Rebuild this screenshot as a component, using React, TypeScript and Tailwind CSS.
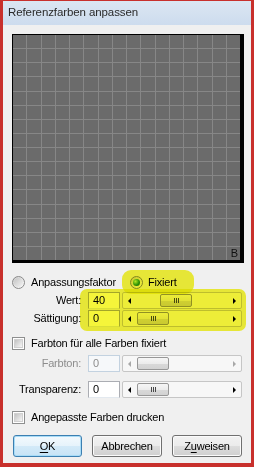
import React from "react";

function Radio({ checked }: { checked?: boolean }) {
  return (
    <span className="w-[13px] h-[13px] rounded-full border border-[#8a8a8a] bg-[linear-gradient(135deg,#cfcfcf,#fdfdfd)] flex items-center justify-center shrink-0">
      {checked ? (
        <span className="w-[7px] h-[7px] rounded-full bg-[radial-gradient(circle_at_35%_35%,#b8f08c,#2f9a1a_55%,#1b5c10)]" />
      ) : (
        <span className="w-[9px] h-[9px] rounded-full bg-[linear-gradient(135deg,#c4c4c4,#f4f4f4)]" />
      )}
    </span>
  );
}

function Check() {
  return (
    <span className="w-[13px] h-[13px] border border-[#8e8f8f] bg-white flex items-center justify-center shrink-0">
      <span className="w-[9px] h-[9px] bg-[linear-gradient(135deg,#c2c2c2,#f6f6f6)] border border-[#d0d0d0]" />
    </span>
  );
}

function Scroll({ thumb, grip = true, disabled }: { thumb: string; grip?: boolean; disabled?: boolean }) {
  return (
    <div className="w-[120px] h-[17px] border border-[#c6c6c6] rounded-[2px] bg-[#f7f7f7] flex items-center">
      <div className="w-[13px] h-full flex items-center justify-center">
        <span
          className={
            disabled
              ? "w-0 h-0 border-y-[3px] border-y-transparent border-r-[3px] border-r-[#a8a8a8]"
              : "w-0 h-0 border-y-[3px] border-y-transparent border-r-[3px] border-r-black"
          }
        />
      </div>
      <div
        className={
          thumb +
          " w-[32px] h-[13px] rounded-[2px] border border-[#979797] bg-[linear-gradient(to_bottom,#f6f6f6_0%,#ececec_50%,#d9d9d9_51%,#d2d2d2_100%)] flex items-center justify-center gap-px"
        }
      >
        {grip && (
          <>
            <span className="w-px h-[5px] bg-[#4a4a4a]" />
            <span className="w-px h-[5px] bg-[#4a4a4a]" />
            <span className="w-px h-[5px] bg-[#4a4a4a]" />
          </>
        )}
      </div>
      <div className="flex-1" />
      <div className="w-[13px] h-full flex items-center justify-center">
        <span
          className={
            disabled
              ? "w-0 h-0 border-y-[3px] border-y-transparent border-l-[3px] border-l-[#a8a8a8]"
              : "w-0 h-0 border-y-[3px] border-y-transparent border-l-[3px] border-l-black"
          }
        />
      </div>
    </div>
  );
}

function Row({ label, value, thumb, grip, disabled, className = "" }: { label: string; value: string; thumb: string; grip?: boolean; disabled?: boolean; className?: string }) {
  return (
    <div className={"flex items-center h-[17px] " + className}>
      <div className={"w-[76px] text-right pr-[7px] " + (disabled ? "text-[#8d8d8d]" : "text-black")}>{label}</div>
      <div
        className={
          disabled
            ? "w-[32px] h-[17px] border border-[#c3d2e0] bg-[#f6f8fa] text-[#8d8d8d] pl-[4px] flex items-center"
            : "w-[32px] h-[17px] border border-[#abadb3] border-b-[#e3e9ef] bg-white text-black pl-[4px] flex items-center"
        }
      >
        {value}
      </div>
      <div className="ml-[2px]">
        <Scroll thumb={thumb} grip={grip} disabled={disabled} />
      </div>
    </div>
  );
}

function Btn({ children, def }: { children: React.ReactNode; def?: boolean }) {
  return (
    <button
      className={
        def
          ? "w-[69px] h-[22px] rounded-[3px] border border-[#3c7fb1] shadow-[inset_0_0_0_1px_#a8dcf7] bg-[linear-gradient(to_bottom,#f3f9fd_0%,#e6f3fb_50%,#d3eaf8_51%,#c7e3f6_100%)] text-black"
          : "w-[70px] h-[22px] rounded-[3px] border border-[#707070] shadow-[inset_0_0_0_1px_#fbfbfb] bg-[linear-gradient(to_bottom,#f2f2f2_0%,#ebebeb_50%,#dddddd_51%,#cfcfcf_100%)] text-black"
      }
    >
      {children}
    </button>
  );
}

export default function App() {
  const cells = Array.from({ length: 256 });
  return (
    <div className="relative w-[254px] h-[467px] bg-[#f0f0f0] border-x-[3px] border-t border-b-[4px] border-[#c8302c] flex flex-col font-['Liberation_Sans',Arial,sans-serif] text-[11px] tracking-[-0.2px] leading-none text-black overflow-hidden">
      <div className="h-[24px] shrink-0 bg-gradient-to-b from-[#dbe6f2] to-[#cddcee] flex items-center pl-[5px] text-[11.5px] tracking-[-0.1px] text-[#2a2a2a]">
        Referenzfarben anpassen
      </div>

      <div className="flex flex-col pl-[9px]">
        <div className="mt-[9px] w-[232px] h-[229px] border-l border-t border-r-[4px] border-b-[3px] border-black bg-[#878787]">
          <div className="grid grid-cols-16 grid-rows-16 gap-px w-full h-full">
            {cells.map((_, i) => (
              <div key={i} className="bg-[#6b6b6b] flex items-end justify-end">
                {i === 255 && <span className="text-[11px] leading-none text-[#111] pr-[2px] pb-px">B</span>}
              </div>
            ))}
          </div>
        </div>

        <div className="mt-[11px] h-[16px] flex items-center">
          <div className="w-[118px] flex items-center gap-[6px]">
            <Radio />
            <span>Anpassungsfaktor</span>
          </div>
          <div className="flex items-center gap-[5px]">
            <Radio checked />
            <span>Fixiert</span>
          </div>
        </div>

        <Row label="Wert:" value="40" thumb="ml-[24px]" className="mt-[2px]" />
        <Row label="Sättigung:" value="0" thumb="ml-[1px]" className="mt-px" />

        <div className="mt-[8px] h-[16px] flex items-center gap-[6px]">
          <Check />
          <span>Farbton für alle Farben fixiert</span>
        </div>

        <Row label="Farbton:" value="0" thumb="ml-[1px]" grip={false} disabled className="mt-[4px]" />
        <Row label="Transparenz:" value="0" thumb="ml-[1px]" className="mt-[9px]" />

        <div className="mt-[11px] h-[16px] flex items-center gap-[6px]">
          <Check />
          <span>Angepasste Farben drucken</span>
        </div>

        <div className="mt-[10px] flex items-center gap-[10px] pl-px">
          <Btn def>
            <span className="underline underline-offset-2">O</span>K
          </Btn>
          <Btn>Abbrechen</Btn>
          <Btn>
            Z<span className="underline underline-offset-2">u</span>weisen
          </Btn>
        </div>
      </div>

      {/* marker highlights drawn over the screenshot */}
      <div className="absolute left-[119px] top-[269px] w-[72px] h-[24px] rounded-[9px] bg-[#f5f53a] mix-blend-multiply" />
      <div className="absolute left-[77px] top-[288px] w-[166px] h-[42px] rounded-[7px] bg-[#f5f53a] mix-blend-multiply" />
    </div>
  );
}
